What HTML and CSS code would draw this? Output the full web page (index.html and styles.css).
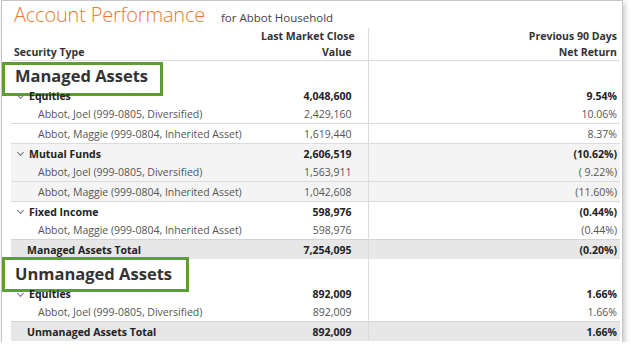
FILE: index.html
```html
<!DOCTYPE html>
<html lang="en">
<head>
    <meta charset="UTF-8">
    <meta name="viewport" content="width=device-width, initial-scale=1.0">
    <title>Account Performance</title>
    <link rel="stylesheet" href="styles.css">
</head>
<body>
    <div class="report-panel">
        <div class="report-title">
            <h1>Account Performance</h1>
            <span class="subtitle">for Abbot Household</span>
        </div>

        <table class="perf-table">
            <colgroup>
                <col class="col-label">
                <col class="col-value">
                <col class="col-return">
            </colgroup>
            <thead>
                <tr>
                    <th class="label">Security Type</th>
                    <th class="num">Last Market Close<br>Value</th>
                    <th class="num ret">Previous 90 Days<br>Net Return</th>
                </tr>
            </thead>
            <tbody>
                <tr class="section">
                    <td class="label"><span class="section-name">Managed Assets</span><span class="callout callout-managed"></span></td>
                    <td></td>
                    <td class="ret"></td>
                </tr>

                <tr class="group first">
                    <td class="label"><span class="chev"></span>Equities</td>
                    <td class="num">4,048,600</td>
                    <td class="num ret">9.54%</td>
                </tr>
                <tr class="child first-child">
                    <td class="label">Abbot, Joel (999-0805, Diversified)</td>
                    <td class="num">2,429,160</td>
                    <td class="num ret">10.06%</td>
                </tr>
                <tr class="child">
                    <td class="label">Abbot, Maggie (999-0804, Inherited Asset)</td>
                    <td class="num">1,619,440</td>
                    <td class="num ret">8.37%</td>
                </tr>

                <tr class="group shaded">
                    <td class="label"><span class="chev"></span>Mutual Funds</td>
                    <td class="num">2,606,519</td>
                    <td class="num ret">(10.62%)</td>
                </tr>
                <tr class="child first-child shaded">
                    <td class="label">Abbot, Joel (999-0805, Diversified)</td>
                    <td class="num">1,563,911</td>
                    <td class="num ret">( 9.22%)</td>
                </tr>
                <tr class="child shaded">
                    <td class="label">Abbot, Maggie (999-0804, Inherited Asset)</td>
                    <td class="num">1,042,608</td>
                    <td class="num ret">(11.60%)</td>
                </tr>

                <tr class="group">
                    <td class="label"><span class="chev"></span>Fixed Income</td>
                    <td class="num">598,976</td>
                    <td class="num ret">(0.44%)</td>
                </tr>
                <tr class="child first-child">
                    <td class="label">Abbot, Maggie (999-0804, Inherited Asset)</td>
                    <td class="num">598,976</td>
                    <td class="num ret">(0.44%)</td>
                </tr>

                <tr class="total">
                    <td class="label">Managed Assets Total</td>
                    <td class="num">7,254,095</td>
                    <td class="num ret">(0.20%)</td>
                </tr>

                <tr class="section">
                    <td class="label"><span class="section-name">Unmanaged Assets</span><span class="callout callout-unmanaged"></span></td>
                    <td></td>
                    <td class="ret"></td>
                </tr>

                <tr class="group first">
                    <td class="label"><span class="chev"></span>Equities</td>
                    <td class="num">892,009</td>
                    <td class="num ret">1.66%</td>
                </tr>
                <tr class="child first-child">
                    <td class="label">Abbot, Joel (999-0805, Diversified)</td>
                    <td class="num">892,009</td>
                    <td class="num ret">1.66%</td>
                </tr>

                <tr class="total">
                    <td class="label">Unmanaged Assets Total</td>
                    <td class="num">892,009</td>
                    <td class="num ret">1.66%</td>
                </tr>
            </tbody>
        </table>
    </div>
</body>
</html>
```

FILE: styles.css
```css
body {
    margin: 0;
    font-family: "Open Sans", "Noto Sans", Arial, sans-serif;
    color: #333;
    background: #fff;
}
.report-panel {
    position: relative;
    margin-left: 1px;
    width: 620px;
    height: 341px;
    border: 1px solid #c6c6c6;
    border-bottom: none;
    box-shadow: 2px 3px 5px rgba(0, 0, 0, 0.22);
    overflow: hidden;
}
.report-title {
    display: flex;
    align-items: baseline;
    height: 27px;
    padding-left: 12px;
}
.report-title h1 {
    margin: 0;
    font-size: 20px;
    font-weight: 300;
    line-height: 27px;
    color: #ea7a2e;
    letter-spacing: -0.2px;
}
.subtitle {
    margin-left: 16px;
    font-size: 11.5px;
    color: #444;
}

.perf-table {
    margin-left: 9px;
    width: 609px;
    table-layout: fixed;
    border-collapse: collapse;
    font-size: 10.5px;
}
.col-label {
    width: 250px;
}
.col-value {
    width: 107px;
}
.perf-table td, .perf-table th {
    padding: 0;
    white-space: nowrap;
}
.perf-table .num {
    text-align: right;
    padding-right: 16px;
}
.perf-table .ret {
    border-left: 1px solid #dcdcdc;
}
.perf-table .num.ret {
    padding-right: 3px;
}

thead th {
    height: 32px;
    padding-bottom: 1px;
    vertical-align: bottom;
    line-height: 16px;
    font-weight: 700;
    color: #333;
    border-bottom: 1px solid #dcdcdc;
}
thead th.label {
    text-align: left;
    padding-left: 3px;
}

.section td {
    height: 26px;
    vertical-align: top;
}
.section .label {
    position: relative;
    padding-left: 4px;
}
.section-name {
    display: block;
    margin-top: 4px;
    font-size: 16.5px;
    font-weight: 700;
    color: #333;
    line-height: 22px;
}
/* green annotation boxes drawn over the section headings */
.callout {
    position: absolute;
    left: -9px;
    border: 3px solid #5c9e31;
}
.callout-managed {
    top: 1px;
    width: 155px;
    height: 28px;
}
.callout-unmanaged {
    top: -2px;
    width: 181px;
    height: 29px;
}

.group td {
    height: 19px;
    font-weight: 700;
    color: #222;
}
.group.first td {
    height: 18px;
}
.group .label {
    padding-left: 18px;
    position: relative;
}
.chev {
    position: absolute;
    left: 7px;
    top: 6px;
    width: 4px;
    height: 4px;
    border-right: 1.3px solid #777;
    border-bottom: 1.3px solid #777;
    transform: rotate(45deg);
}
.group:not(.first) td {
    border-top: 1px solid #dcdcdc;
}

.child td {
    height: 18px;
    color: #555;
}
.child .label {
    padding-left: 27px;
}
.child:not(.first-child) td {
    height: 19px;
    border-top: 1px solid #dcdcdc;
}
.shaded td {
    background: #f4f4f4;
}

.total td {
    height: 19px;
    font-weight: 700;
    color: #222;
    background: #e7e7e7;
    border-top: 1px solid #d4d4d4;
}
.total .label {
    padding-left: 16px;
}
```
